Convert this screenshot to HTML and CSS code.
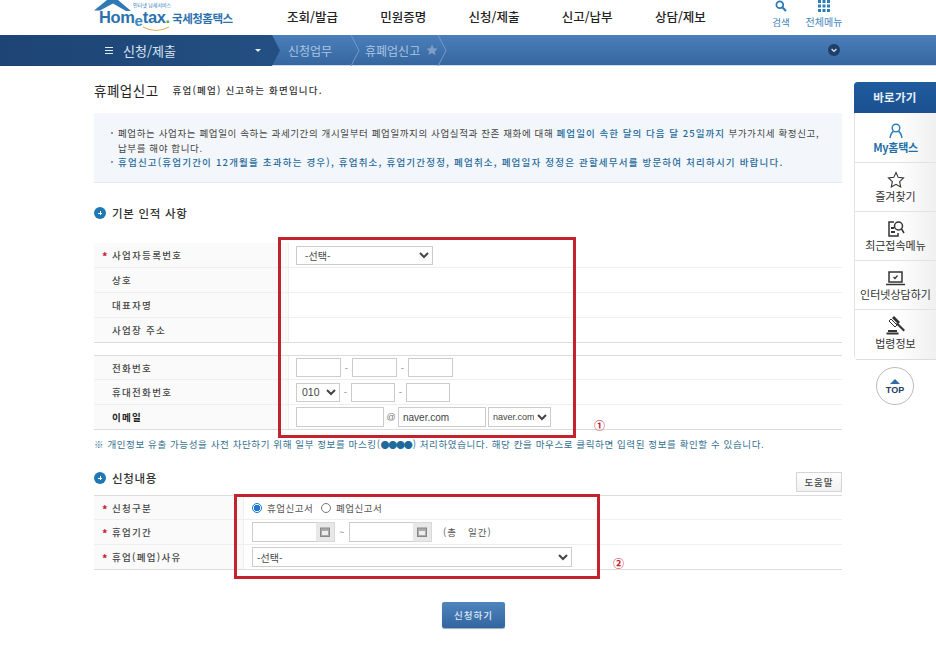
FILE: index.html
```html
<!DOCTYPE html>
<html lang="ko">
<head>
<meta charset="utf-8">
<title>휴폐업신고</title>
<link rel="stylesheet" href="styles.css">
</head>
<body>
<header class="top">
  <a class="logo">
    <svg class="roof" width="40" height="12" viewBox="0 0 40 12"><path d="M1 10.500 L14 0 L25 0 L38 11 L33 11 L20 3.500 L7 10.500 Z" fill="#2f79b5"/></svg>
    <span class="logo-tag">인터넷 납세서비스</span>
    <span class="logo-h">Hom</span><span class="logo-e">e</span><span class="logo-h">tax</span><span class="logo-dot">.</span><span class="logo-k">국세청홈택스</span>
    <svg class="swoosh" width="28" height="6" viewBox="0 0 28 6"><path d="M1 1 Q14 8 27 1" fill="none" stroke="#e9b45a" stroke-width="1.2"/></svg>
  </a>
  <nav class="gnb">
    <span>조회/발급</span><span>민원증명</span><span>신청/제출</span><span>신고/납부</span><span>상담/제보</span>
  </nav>
  <div class="tools">
    <div class="tool tool-search">
      <svg width="12" height="12" viewBox="0 0 12 12"><circle cx="4.800" cy="4.800" r="3.400" fill="none" stroke="#2b7cb8" stroke-width="1.800"/><path d="M7.300 7.300 L11 11" stroke="#2b7cb8" stroke-width="2.200"/></svg>
      <span>검색</span>
    </div>
    <div class="tool tool-all">
      <svg width="12" height="12" viewBox="0 0 12 12" fill="#2b7cb8"><rect x="0" y="0" width="3" height="3"/><rect x="4.500" y="0" width="3" height="3"/><rect x="9" y="0" width="3" height="3"/><rect x="0" y="4.500" width="3" height="3"/><rect x="4.500" y="4.500" width="3" height="3"/><rect x="9" y="4.500" width="3" height="3"/><rect x="0" y="9" width="3" height="3"/><rect x="4.500" y="9" width="3" height="3"/><rect x="9" y="9" width="3" height="3"/></svg>
      <span>전체메뉴</span>
    </div>
  </div>
</header>

<div class="bar">
  <div class="bar-cur">
    <span class="burger"></span><span class="bar-title">신청/제출</span><span class="caret"></span>
  </div>
  <svg class="bar-tip" width="8" height="31" viewBox="0 0 8 31"><path d="M0 0 L8 15.500 L0 31 Z" fill="#234f82"/></svg>
  <span class="crumb crumb-1">신청업무</span>
  <svg class="chev chev-1" width="10" height="31" viewBox="0 0 10 31"><path d="M1 0 L9 15.500 L1 31" fill="none" stroke="#6f9ccb"/></svg>
  <span class="crumb crumb-2">휴폐업신고</span>
  <svg class="star" width="12" height="12" viewBox="0 0 24 24"><path d="M12 1l3.400 7.300 7.900 1-5.800 5.500 1.500 7.900L12 18l-7 3.700 1.500-7.900L.7 9.300l7.900-1z" fill="#7d9fc7"/></svg>
  <svg class="chev" width="10" height="31" viewBox="0 0 10 31"><path d="M1 0 L9 15.500 L1 31" fill="none" stroke="#6f9ccb"/></svg>
  <span class="bar-more"><svg width="12" height="12" viewBox="0 0 12 12"><circle cx="6" cy="6" r="6" fill="#1f3f68"/><path d="M3.600 5 L6 7.400 L8.400 5" fill="none" stroke="#dfe8f2" stroke-width="1.300"/></svg></span>
</div>

<div class="page">
  <main class="main">
    <div class="title-row">
      <h1>휴폐업신고</h1>
      <p>휴업(폐업) 신고하는 화면입니다.</p>
    </div>

    <div class="info">
      <p><i class="dot"></i>폐업하는 사업자는 폐업일이 속하는 과세기간의 개시일부터 폐업일까지의 사업실적과 잔존 재화에 대해 <b>폐업일이 속한 달의 다음 달 25일까지</b> 부가가치세 확정신고,<br>납부를 해야 합니다.</p>
      <p class="strong"><i class="dot"></i>휴업신고(휴업기간이 12개월을 초과하는 경우), 휴업취소, 휴업기간정정, 폐업취소, 폐업일자 정정은 관할세무서를 방문하여 처리하시기 바랍니다.</p>
    </div>

    <h2 class="sec sec-1"><i class="plus"></i>기본 인적 사항</h2>

    <div class="form form-a">
      <div class="row"><div class="lab"><em>*</em>사업자등록번호</div><div class="val"><select class="f sel-biz"><option>-선택-</option></select></div></div>
      <div class="row"><div class="lab">상호</div><div class="val"></div></div>
      <div class="row"><div class="lab">대표자명</div><div class="val"></div></div>
      <div class="row"><div class="lab">사업장 주소</div><div class="val"></div></div>
    </div>

    <div class="form form-a form-b">
      <div class="row"><div class="lab">전화번호</div><div class="val">
        <input class="f tel"><span class="dash">-</span><input class="f tel"><span class="dash">-</span><input class="f tel">
      </div></div>
      <div class="row"><div class="lab">휴대전화번호</div><div class="val">
        <select class="f sel-mob"><option>010</option></select><span class="dash dash-m">-</span><input class="f tel-m"><span class="dash">-</span><input class="f tel-m">
      </div></div>
      <div class="row"><div class="lab lab-b">이메일</div><div class="val">
        <input class="f mail"><span class="at">@</span><input class="f mail" value="naver.com"><select class="f sel-mail"><option>naver.com</option></select>
      </div></div>
    </div>

    <p class="note">※ 개인정보 유출 가능성을 사전 차단하기 위해 일부 정보를 마스킹(<span class="mask">●●●●</span>) 처리하였습니다. 해당 칸을 마우스로 클릭하면 입력된 정보를 확인할 수 있습니다.</p>

    <div class="sec-row">
      <h2 class="sec"><i class="plus"></i>신청내용</h2>
      <button class="help">도움말</button>
    </div>

    <div class="form form-c">
      <div class="row"><div class="lab"><em>*</em>신청구분</div><div class="val">
        <label class="radio"><i class="r on"></i>휴업신고서</label><label class="radio"><i class="r"></i>폐업신고서</label>
      </div></div>
      <div class="row"><div class="lab"><em>*</em>휴업기간</div><div class="val">
        <input class="f date"><span class="cal"><svg width="10" height="10" viewBox="0 0 10 10"><rect x=".5" y="1" width="9" height="8.500" fill="#aaa" stroke="#888"/><rect x="2" y="4" width="6" height="4" fill="#eee"/></svg></span>
        <span class="tilde">~</span>
        <input class="f date"><span class="cal"><svg width="10" height="10" viewBox="0 0 10 10"><rect x=".5" y="1" width="9" height="8.500" fill="#aaa" stroke="#888"/><rect x="2" y="4" width="6" height="4" fill="#eee"/></svg></span>
        <span class="total">(총 &nbsp; 일간)</span>
      </div></div>
      <div class="row"><div class="lab"><em>*</em>휴업(폐업)사유</div><div class="val"><select class="f sel-why"><option>-선택-</option></select></div></div>
    </div>

    <div class="actions"><button class="submit">신청하기</button></div>

    <div class="mark mark-1"></div>
    <div class="mark mark-2"></div>
    <span class="num num-1">①</span>
    <span class="num num-2">②</span>
  </main>

  <aside class="side">
    <div class="side-box">
      <div class="side-head">바로가기</div>
      <a class="side-item my">
        <svg width="16" height="16" viewBox="0 0 16 16" fill="none" stroke="#2b7cb8" stroke-width="1.400"><circle cx="8" cy="5" r="3.800"/><path d="M2 15 Q3 9.500 5.500 8.500 M14 15 Q13 9.500 10.500 8.500"/></svg>
        <span>My홈택스</span>
      </a>
      <a class="side-item">
        <svg width="18" height="17" viewBox="0 0 24 23" fill="none" stroke="#333" stroke-width="1.500"><path d="M12 2l3 6.600 7.200 .9-5.300 5 1.400 7.100L12 18.100l-6.300 3.500 1.400-7.100-5.300-5 7.200-.9z"/></svg>
        <span>즐겨찾기</span>
      </a>
      <a class="side-item">
        <svg width="18" height="17" viewBox="0 0 18 17" fill="none" stroke="#333" stroke-width="1.500"><path d="M7 2H2v14h9v-3"/><circle cx="11.500" cy="6" r="4"/><path d="M14.500 9 L17 13"/><path d="M4 8h3M4 12h4" stroke-width="2"/></svg>
        <span>최근접속메뉴</span>
      </a>
      <a class="side-item">
        <svg width="19" height="15" viewBox="0 0 19 15" fill="none" stroke="#333" stroke-width="1.500"><rect x="3" y="1" width="13" height="10"/><path d="M0 13.500h19"/><path d="M7.500 6l1.500 1.500 2.500-3" stroke-width="1.200"/></svg>
        <span>인터넷상담하기</span>
      </a>
      <a class="side-item">
        <svg width="20" height="20" viewBox="0 0 20 20" fill="#333"><path d="M8 1l6 6-2 2-6-6z"/><path d="M3 6l2-2 6 6-2 2z" fill="none" stroke="#333"/><path d="M10 9l1.500-1.500 7.500 7.500-1.500 1.500z"/><rect x="2" y="15" width="9" height="2"/><rect x="0.500" y="17.500" width="12" height="2"/></svg>
        <span>법령정보</span>
      </a>
    </div>
    <a class="to-top"><i></i>TOP</a>
  </aside>
</div>
</body>
</html>
```
FILE: styles.css
```css
* { box-sizing: border-box; }
html, body { margin: 0; padding: 0; }
body {
  width: 936px;
  height: 650px;
  overflow: hidden;
  background: #fff;
  color: #333;
  font-family: "Noto Sans CJK KR", "Noto Sans", sans-serif;
  font-size: 10px;
}
h1, h2, p { margin: 0; font-weight: normal; }
em, i { font-style: normal; }

/* header */
.top { display: flex; height: 35px; padding-left: 93px; }
.logo { position: relative; display: flex; align-items: baseline; width: 194px; height: 35px; padding: 9px 0 0 6px; white-space: nowrap; }
.roof { position: absolute; left: 0; top: 0; }
.logo-tag { position: absolute; left: 40px; top: 2px; font-size: 5px; line-height: 6px; color: #2f79b5; white-space: nowrap; }
.swoosh { position: absolute; left: 49px; top: 26px; }
.logo-h { font: bold 16.500px/16px "Liberation Sans", sans-serif; color: #2a72ad; letter-spacing: -.4px; }
.logo-e { font: bold 15px/16px "Liberation Sans", sans-serif; color: #3a8ac4; position: relative; top: 3px; }
.logo-dot { font: bold 16.500px/16px "Liberation Sans", sans-serif; color: #58a83c; margin-right: 2px; }
.logo-k { font-size: 11.500px; line-height: 14px; font-weight: 700; color: #2a72ad; letter-spacing: -.5px; }
.gnb { display: flex; gap: 42.300px; width: 465px; }
.gnb span { font-size: 12.500px; font-weight: 500; line-height: 33px; color: #222; white-space: nowrap; }
.tools { display: flex; }
.tool { display: flex; flex-direction: column; align-items: center; font-size: 9.500px; line-height: 12px; color: #3f86ba; white-space: nowrap; }
.tool svg { display: block; margin-bottom: 4px; }
.tool-search { width: 20px; margin-left: 19px; }
.tool-all { width: 40px; margin-left: 13px; font-size: 10px; }

/* location bar */
.bar {
  display: flex; align-items: center; height: 31px;
  background: linear-gradient(#4b7fbb, #36669e);
  border-bottom: 1px solid #cfdbe8;
  color: #a9c5e4;
  white-space: nowrap;
}
.bar-cur {
  display: flex; align-items: center; width: 272px; height: 31px; padding-left: 105px;
  background: linear-gradient(90deg, #1d4474 0, #234f82 100%);
  color: #d9e4f0;
}
.burger { width: 8px; height: 7px; margin-right: 10px; border-top: 1px solid #e4ecf5; border-bottom: 1px solid #e4ecf5; background: linear-gradient(#e4ecf5, #e4ecf5) center / 100% 1px no-repeat; }
.bar-title { font-size: 13px; width: 132px; }
.caret { border: 3px solid transparent; border-top: 3px solid #e4ecf5; border-bottom: 0; }
.bar-tip { flex: none; height: 31px; }
.crumb { font-size: 12px; }
.crumb-1 { margin-left: 8px; width: 62px; }
.crumb-2 { margin-left: 5px; width: 61px; }
.chev { flex: none; height: 31px; }
.star { flex: none; margin-right: -1px; }
.bar-more { margin-left: 381px; display: flex; }

/* page */
.page { display: flex; padding-left: 94px; }
.main { position: relative; width: 748px; height: 584px; padding-top: 14px; }

.title-row { display: flex; align-items: center; height: 20px; }
.title-row h1 { font-size: 13.500px; color: #222; letter-spacing: .5px; margin-right: 14px; }
.title-row p { font-size: 9.500px; font-weight: 500; letter-spacing: 1.200px; color: #333; }

.info {
  margin-top: 13px; height: 70px; padding: 13px 14px 0 24px;
  background: #f3f7fb; border-bottom: 1px solid #e2e8ee;
  font-size: 9.500px; line-height: 14.500px; color: #444; letter-spacing: .62px;
}
.info p { position: relative; white-space: nowrap; }
.info b { font-weight: 500; color: #1f6a9c; letter-spacing: 1.050px; }
.info .strong { font-weight: 500; color: #1f6a9c; letter-spacing: 1.200px; }
.dot { position: absolute; left: -7px; top: 6px; width: 2px; height: 2px; background: #777; border-radius: 50%; }

.sec { display: flex; align-items: center; height: 20px; font-size: 11.500px; font-weight: 500; color: #333; letter-spacing: .7px; white-space: nowrap; }
.sec-1 { margin-top: 20px; }
.plus { position: relative; flex: none; width: 12px; height: 12px; margin-right: 6px; border-radius: 50%; background: #1f78b4; }
.plus::before { content: ""; position: absolute; left: 5.500px; top: 4px; width: 1px; height: 4px; background: #fff; }
.plus::after { content: ""; position: absolute; left: 4px; top: 5.500px; width: 4px; height: 1px; background: #fff; }

.form { border-bottom: 1px solid #dcdcdc; }
.form-a { margin-top: 20px; }
.form-b { margin-top: 12px; border-top: 1px solid #dcdcdc; }
.form-c { margin-top: 3px; border-top: 1px solid #dcdcdc; }
.row { display: grid; grid-template-columns: 195px 1fr; height: 25px; border-bottom: 1px solid #efefef; }
.row:last-child { height: 24px; border-bottom: 0; }
.form-b .row:first-child, .form-c .row:first-child { height: 24px; }
.form-c .row { grid-template-columns: 150px 1fr; }
.lab {
  position: relative; display: flex; align-items: center; padding-left: 18px;
  background: #fafafa; border-right: 1px solid #efefef;
  font-size: 9.500px; font-weight: 500; letter-spacing: 1.300px; color: #444; white-space: nowrap;
}
.lab-b { font-weight: 700; color: #222; }
.lab em { position: absolute; left: 8px; top: 6px; color: #c8202c; font-size: 11px; line-height: 14px; font-weight: 700; }
.val { display: flex; align-items: center; padding-left: 7px; font-size: 9.500px; }
.form-c .val { padding-left: 8px; }

.f {
  height: 20px; margin: 0; padding: 0 4px; background: #fff; border: 1px solid #ccc; border-radius: 0;
  font-family: "Liberation Sans", "Noto Sans CJK KR", sans-serif; font-size: 10px; color: #444; outline: 0;
}
.sel-biz { width: 137px; height: 19px; font-family: "Noto Sans CJK KR", sans-serif; }
.tel { width: 45px; height: 19px; }
.tel-m { width: 44px; height: 19px; }
.sel-mob { width: 44px; height: 19px; padding: 0 0 0 1px; font-size: 10.500px; }
.dash { width: 11px; text-align: center; color: #888; }
.mail { width: 88px; }
.at { width: 14px; text-align: center; color: #777; font: 9px "Liberation Sans", sans-serif; }
.sel-mail { width: 63px; margin-left: 2px; padding: 0; font-size: 9px; }
.sel-why { width: 320px; height: 20px; padding: 0; font-family: "Noto Sans CJK KR", sans-serif; }

.note { margin-top: 7px; height: 14px; font-size: 9.500px; line-height: 14px; letter-spacing: .61px; color: #35708f; white-space: nowrap; }
.mask { color: #1f6a9c; letter-spacing: -1.200px; margin-right: 1px; font-size: 9px; }

.sec-row { display: flex; justify-content: space-between; align-items: flex-start; height: 24px; margin-top: 17px; }
.help {
  width: 46px; height: 20px; margin-top: 4px; padding: 0; background: linear-gradient(#fff, #f1f1f1); border: 1px solid #d4d4d4;
  font: 500 9.500px "Noto Sans CJK KR", sans-serif; letter-spacing: 1px; color: #444;
}
.radio { display: flex; align-items: center; width: 69px; letter-spacing: .5px; color: #555; white-space: nowrap; }
.r { flex: none; width: 10px; height: 10px; margin-right: 5px; border: 1px solid #777; border-radius: 50%; background: #fff; }
.r.on { border-color: #2070c0; background: radial-gradient(circle, #1f78d0 0 3px, #fff 3.500px); }
.date { width: 64px; height: 20px; border-right: 0; }
.cal { display: flex; align-items: center; justify-content: center; width: 19px; height: 20px; background: #e8e8e8; border: 1px solid #d8d8d8; border-left: 0; }
.tilde { width: 14px; text-align: center; color: #777; }
.total { margin-left: 11px; color: #555; letter-spacing: 1px; white-space: nowrap; }

.actions { display: flex; justify-content: center; margin-top: 32px; padding-left: 11px; }
.submit {
  width: 63px; height: 26px; padding: 0; border: 0; border-radius: 2px;
  background: linear-gradient(#4f84bd, #33659f);
  box-shadow: 0 1px 1px #9ab;
  font: 500 9.500px "Noto Sans CJK KR", sans-serif; letter-spacing: 1px; color: #dfe9f4;
}

/* annotations drawn on top of the form */
.mark { position: absolute; border: 3px solid #c2232e; pointer-events: none; }
.mark-1 { left: 184px; top: 171px; width: 298px; height: 201px; }
.mark-2 { left: 140px; top: 428px; width: 366px; height: 85px; }
.num { position: absolute; color: #c2232e; font-size: 11px; line-height: 12px; font-weight: 700; }
.num-1 { left: 500px; top: 353px; }
.num-2 { left: 519px; top: 491px; }

/* right rail */
.side { width: 82px; margin-left: 12px; padding-top: 16px; }
.side-box { border-left: 1px solid #e4e4e4; border-bottom: 1px solid #ddd; border-radius: 4px 0 0 4px; }
.side-head {
  height: 31px; margin-left: -1px; border-radius: 4px 0 0 0;
  background: linear-gradient(#1f5c9e, #1b5090);
  color: #e8f0f8; font-size: 11.500px; font-weight: 700; line-height: 31px; text-align: center; letter-spacing: .3px;
}
.side-item {
  display: flex; flex-direction: column; align-items: center; justify-content: flex-end; height: 49px; padding-bottom: 8px;
  border-bottom: 1px solid #e2e2e2; background: linear-gradient(90deg, #fff 50%, #f0f0f0);
  font-size: 11px; line-height: 14px; color: #333; white-space: nowrap;
}
.side-item:last-child { border-bottom: 0; padding-bottom: 9px; }
.side-item svg { margin-bottom: 1px; }
.side-item.my { height: 50px; color: #1f6fa8; font-weight: 700; font-size: 11px; letter-spacing: -.3px; }
.to-top {
  display: flex; flex-direction: column; align-items: center; width: 38px; height: 38px; margin: 7px 0 0 22px; padding-top: 11px;
  border: 1px solid #bbb; border-radius: 50%; background: #fff;
  font: bold 9px/10px "Liberation Sans", sans-serif; color: #24405f;
}
.to-top i { width: 0; height: 0; margin-bottom: 1px; border: 5px solid transparent; border-top: 0; border-bottom: 5px solid #2f6ca8; }
```
